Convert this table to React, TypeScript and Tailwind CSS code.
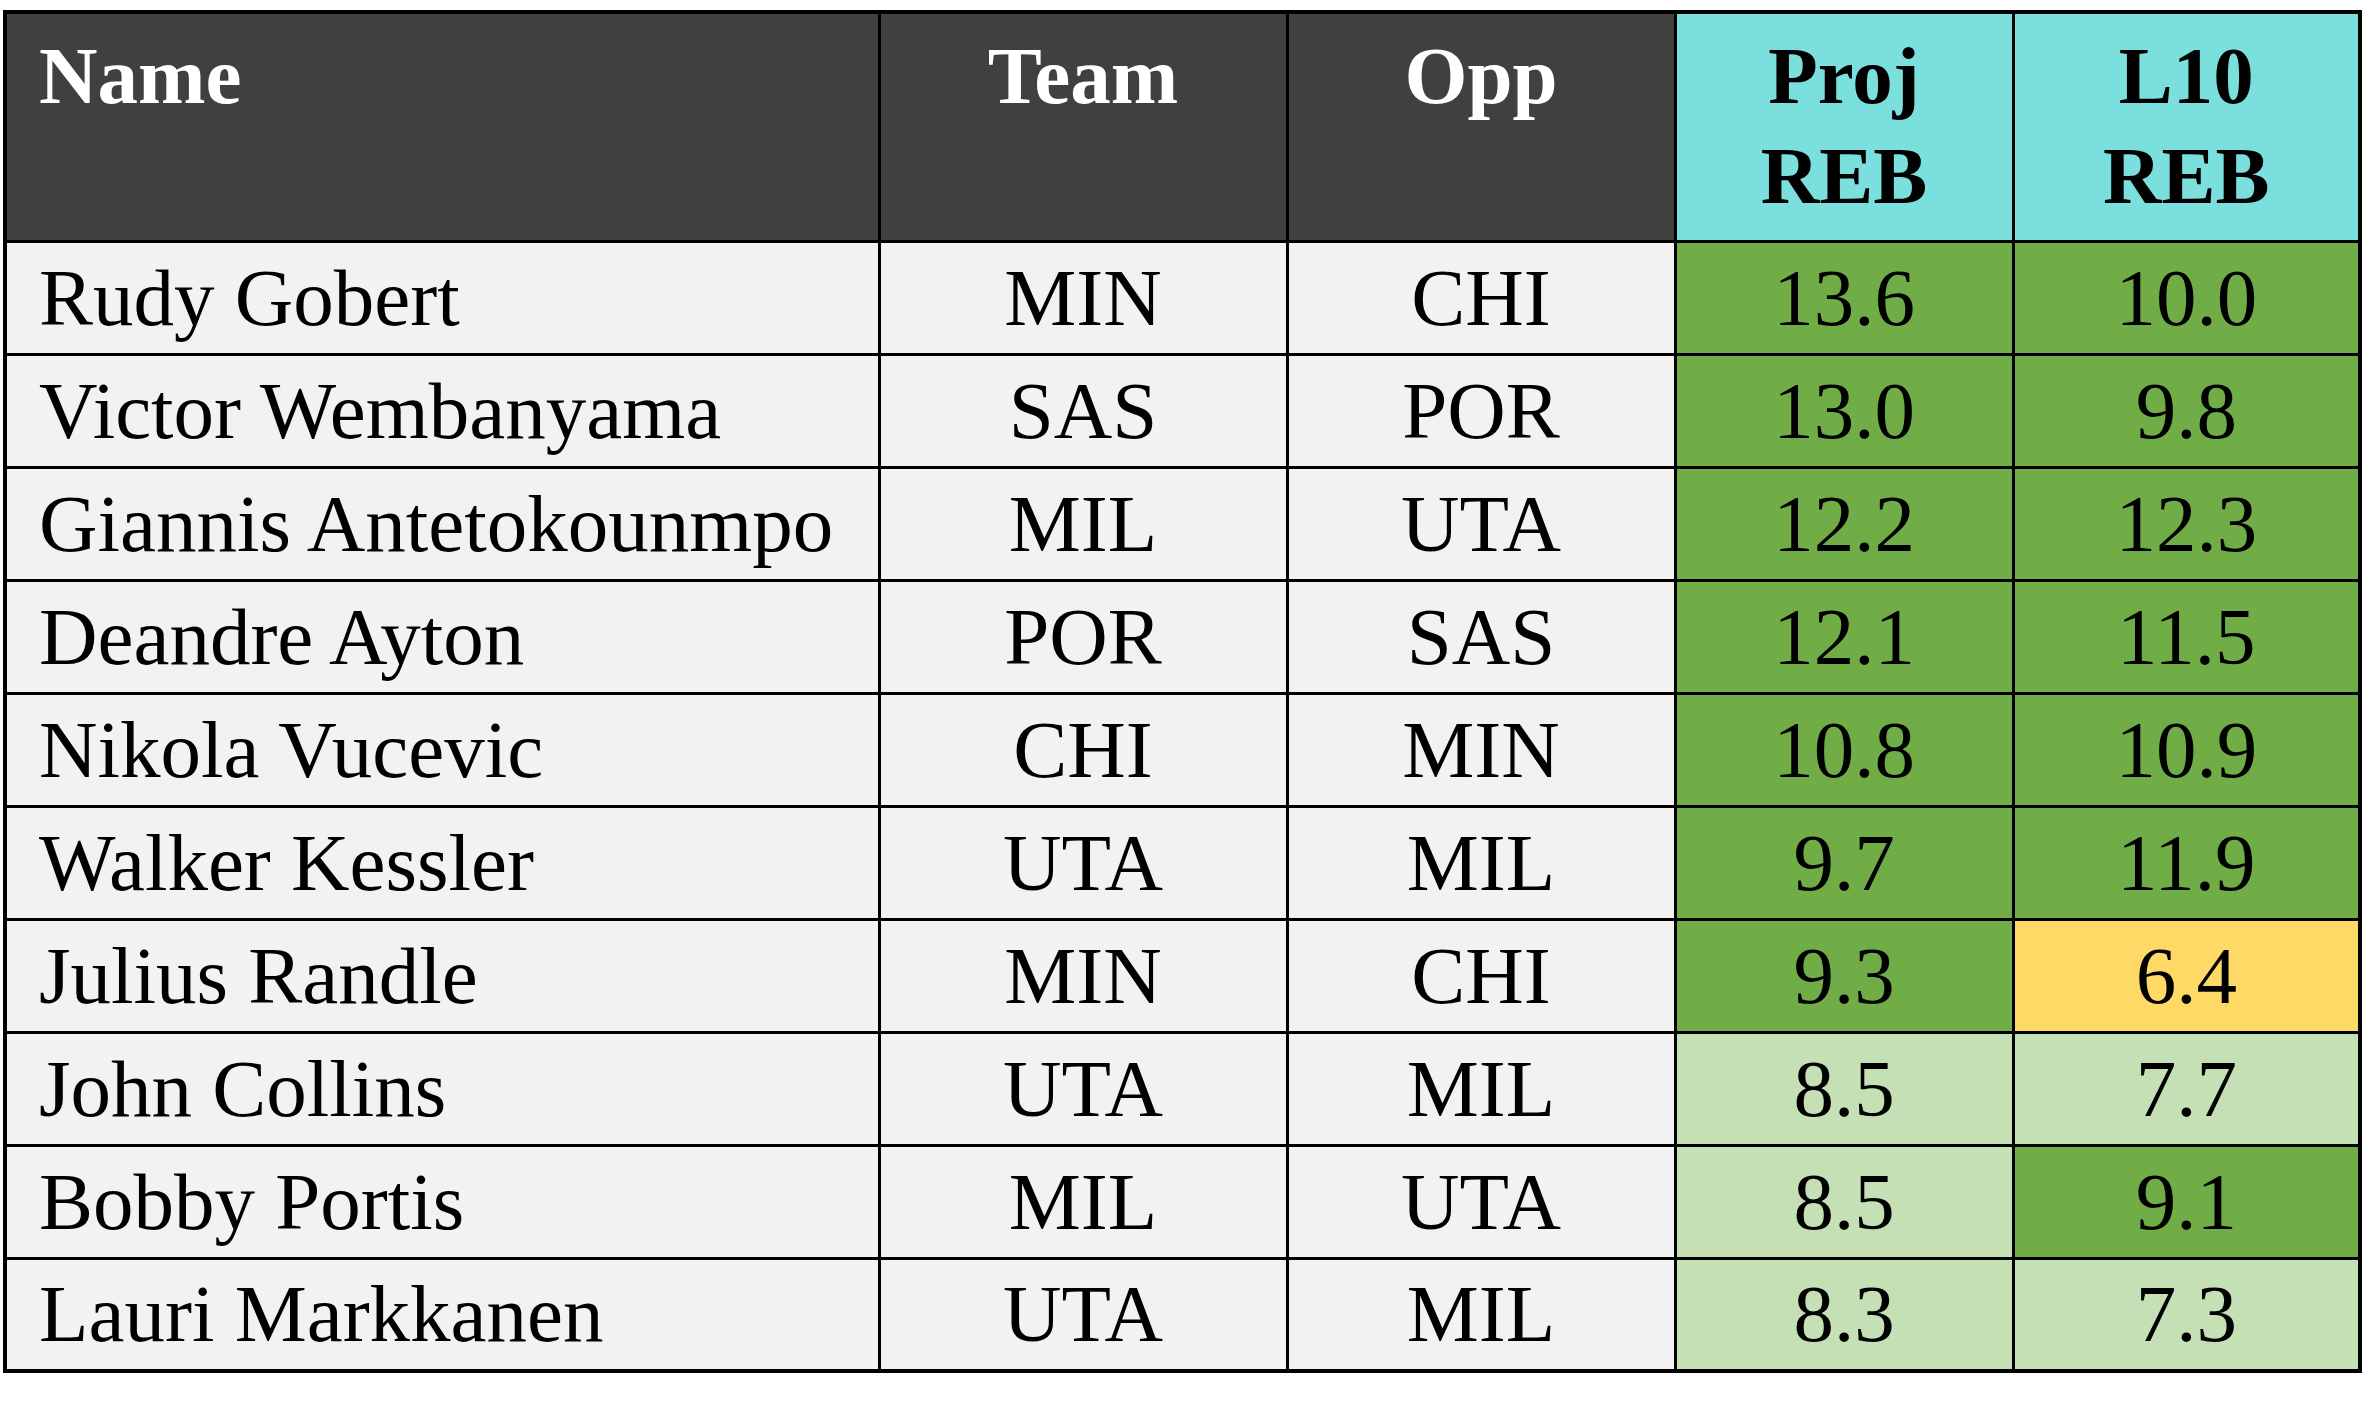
import React from "react";

type Tone = "high" | "low" | "warn";

type Row = {
  name: string;
  team: string;
  opp: string;
  proj: string;
  l10: string;
  projTone: Tone;
  l10Tone: Tone;
};

const toneClass: Record<Tone, string> = {
  high: "bg-[#70ad47]",
  low: "bg-[#c5e0b4]",
  warn: "bg-[#ffd966]",
};

const rows: Row[] = [
  { name: "Rudy Gobert", team: "MIN", opp: "CHI", proj: "13.6", l10: "10.0", projTone: "high", l10Tone: "high" },
  { name: "Victor Wembanyama", team: "SAS", opp: "POR", proj: "13.0", l10: "9.8", projTone: "high", l10Tone: "high" },
  { name: "Giannis Antetokounmpo", team: "MIL", opp: "UTA", proj: "12.2", l10: "12.3", projTone: "high", l10Tone: "high" },
  { name: "Deandre Ayton", team: "POR", opp: "SAS", proj: "12.1", l10: "11.5", projTone: "high", l10Tone: "high" },
  { name: "Nikola Vucevic", team: "CHI", opp: "MIN", proj: "10.8", l10: "10.9", projTone: "high", l10Tone: "high" },
  { name: "Walker Kessler", team: "UTA", opp: "MIL", proj: "9.7", l10: "11.9", projTone: "high", l10Tone: "high" },
  { name: "Julius Randle", team: "MIN", opp: "CHI", proj: "9.3", l10: "6.4", projTone: "high", l10Tone: "warn" },
  { name: "John Collins", team: "UTA", opp: "MIL", proj: "8.5", l10: "7.7", projTone: "low", l10Tone: "low" },
  { name: "Bobby Portis", team: "MIL", opp: "UTA", proj: "8.5", l10: "9.1", projTone: "low", l10Tone: "high" },
  { name: "Lauri Markkanen", team: "UTA", opp: "MIL", proj: "8.3", l10: "7.3", projTone: "low", l10Tone: "low" },
];

const cell = "border-[3px] border-black p-0";

export default function App() {
  return (
    <div
      className="min-h-screen bg-white pl-[3px] pt-[10px] text-black"
      style={{ fontFamily: '"Liberation Serif", "Times New Roman", serif' }}
    >
      <table className="table-fixed border-collapse border-4 border-black w-[2355px] text-[81px] leading-[100px]">
        <colgroup>
          <col className="w-[874px]" />
          <col className="w-[408px]" />
          <col className="w-[388px]" />
          <col className="w-[338px]" />
          <col className="w-[347px]" />
        </colgroup>
        <thead>
          <tr className="h-[229px] align-top font-bold">
            <th className={`${cell} bg-[#404040] text-white text-left pl-[32px] pt-[12px]`}>Name</th>
            <th className={`${cell} bg-[#404040] text-white text-center pt-[12px]`}>Team</th>
            <th className={`${cell} bg-[#404040] text-white text-center pt-[12px]`}>Opp</th>
            <th className={`${cell} bg-[#7bdfdd] text-center pt-[12px]`}>
              Proj
              <br />
              REB
            </th>
            <th className={`${cell} bg-[#7bdfdd] text-center pt-[12px]`}>
              L10
              <br />
              REB
            </th>
          </tr>
        </thead>
        <tbody>
          {rows.map((r) => (
            <tr key={r.name} className="h-[113px] align-middle">
              <td className={`${cell} bg-[#f2f2f2] pl-[32px] whitespace-nowrap`}>{r.name}</td>
              <td className={`${cell} bg-[#f2f2f2] text-center`}>{r.team}</td>
              <td className={`${cell} bg-[#f2f2f2] text-center`}>{r.opp}</td>
              <td className={`${cell} ${toneClass[r.projTone]} text-center`}>{r.proj}</td>
              <td className={`${cell} ${toneClass[r.l10Tone]} text-center`}>{r.l10}</td>
            </tr>
          ))}
        </tbody>
      </table>
    </div>
  );
}
